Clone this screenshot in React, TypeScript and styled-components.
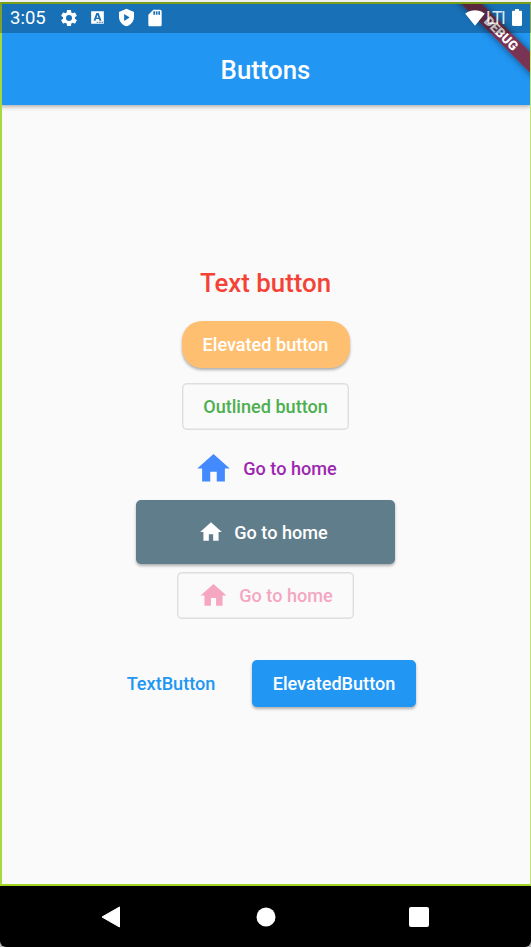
import React from "react";
import styled, { createGlobalStyle } from "styled-components";

const Global = createGlobalStyle`
  body { margin: 0; background: #f5f5f5; }
  * { box-sizing: border-box; }
`;

const Phone = styled.div`
  position: relative;
  width: 531px;
  height: 947px;
  padding-top: 2px;
  overflow: hidden;
  display: flex;
  flex-direction: column;
  background: linear-gradient(#f0eff0 50%, #b4b4b4 50%);
  font-family: Roboto, "Liberation Sans", sans-serif;
  -webkit-font-smoothing: antialiased;
`;

const Screen = styled.div`
  position: relative;
  height: 884px;
  display: flex;
  flex-direction: column;
  background: #fafafa;
  overflow: hidden;
`;

const DebugOutline = styled.div`
  position: absolute;
  inset: 0;
  border: 2px solid #a2d51f;
  border-width: 2px 1px 2px 2px;
  border-left-color: #a8d93a;
  border-right-color: #bfe672;
  pointer-events: none;
`;

const AppBar = styled.header`
  height: 103px;
  flex: none;
  background: #2196f3;
  box-shadow: 0 1px 5px rgba(0, 0, 0, 0.4);
`;

const StatusBar = styled.div`
  position: relative;
  z-index: 2;
  height: 31px;
  padding: 0 9px 0 10px;
  display: flex;
  align-items: center;
  background: rgba(0, 0, 0, 0.25);
  color: #fff;
`;

const Clock = styled.span`
  width: 49px;
  font-size: 18.5px;
  line-height: 31px;
  padding-top: 2px;
`;

const StatusIcon = styled.svg<{ $w: number; $h?: number; $gap?: number }>`
  width: ${(p) => p.$w}px;
  height: ${(p) => p.$h ?? p.$w}px;
  margin-right: ${(p) => p.$gap ?? 0}px;
  fill: #fff;
  flex: none;
`;

const Spacer = styled.div`
  flex: 1;
`;

const Network = styled.span`
  width: 26px;
  margin-left: 1px;
  font-size: 17.5px;
  font-weight: 400;
  letter-spacing: -1.2px;
  color: rgba(255, 255, 255, 0.85);
`;

const Title = styled.h1`
  margin: 0;
  height: 72px;
  line-height: 74px;
  text-align: center;
  color: #fff;
  font-size: 25.8px;
  font-weight: 500;
`;

const Body = styled.main`
  display: flex;
  flex-direction: column;
  align-items: center;
  padding-top: 147px;
`;

const Row = styled.div<{ $h: number; $top?: number; $gap?: number }>`
  height: ${(p) => p.$h}px;
  margin-top: ${(p) => p.$top ?? 0}px;
  display: flex;
  align-items: center;
  justify-content: center;
  gap: ${(p) => p.$gap ?? 0}px;
`;

const Button = styled.button<{
  $w: number;
  $h?: number;
  $color: string;
  $bg?: string;
  $radius?: number;
  $gap?: number;
  $size?: number;
  $outlined?: boolean;
  $padRight?: number;
}>`
  width: ${(p) => p.$w}px;
  height: ${(p) => p.$h ?? 47}px;
  padding: 0 ${(p) => p.$padRight ?? 0}px 0 0;
  display: flex;
  align-items: center;
  justify-content: center;
  gap: ${(p) => p.$gap ?? 0}px;
  border: 0;
  border-radius: ${(p) => p.$radius ?? 5}px;
  background: ${(p) => p.$bg ?? "transparent"};
  box-shadow: ${(p) =>
    p.$outlined
      ? "inset 0 0 0 1.4px #dedede"
      : p.$bg
        ? "0 2px 3px rgba(0, 0, 0, 0.3)"
        : "none"};
  color: ${(p) => p.$color};
  font-family: inherit;
  font-size: ${(p) => p.$size ?? 18.1}px;
  font-weight: 500;
  white-space: nowrap;
`;

const HomeSvg = styled.svg<{ $s: number; $fill: string }>`
  width: ${(p) => p.$s}px;
  height: ${(p) => p.$s}px;
  fill: ${(p) => p.$fill};
  flex: none;
`;

const Home = ({ size, fill }: { size: number; fill: string }) => (
  <HomeSvg viewBox="0 0 24 24" $s={size} $fill={fill}>
    <path d="M10 20v-6h4v6h5v-8h3L12 3 2 12h3v8z" />
  </HomeSvg>
);

const BannerClip = styled.div`
  position: absolute;
  inset: 0;
  overflow: hidden;
  pointer-events: none;
`;

const Banner = styled.div`
  position: absolute;
  left: 441px;
  top: 24px;
  width: 120px;
  height: 15.4px;
  transform: rotate(45deg);
  background: rgba(160, 8, 14, 0.7);
  box-shadow: 0 0 7px rgba(0, 0, 0, 0.5);
  color: #fff;
  font-size: 13px;
  line-height: 15.4px;
  font-weight: 900;
  text-align: center;
`;

const NavBar = styled.nav`
  height: 61px;
  padding-top: 1px;
  display: grid;
  grid-template-columns: 189px 153px 189px;
  align-items: center;
  background: #000;
  border-radius: 0 0 6px 6px;
`;

const NavIcon = styled.svg<{ $left: number }>`
  width: 20px;
  height: 22px;
  margin-left: ${(p) => p.$left}px;
  fill: #fff;
`;

export default function App() {
  return (
    <Phone>
      <Global />
      <Screen>
        <AppBar>
          <StatusBar>
            <Clock>3:05</Clock>
            <StatusIcon viewBox="0 0 24 24" $w={20} $gap={9}>
              <path d="M19.14 12.94c.04-.3.06-.61.06-.94 0-.32-.02-.64-.07-.94l2.03-1.58c.18-.14.23-.41.12-.61l-1.92-3.32c-.12-.22-.37-.29-.59-.22l-2.39.96c-.5-.38-1.03-.7-1.62-.94l-.36-2.54c-.04-.24-.24-.41-.48-.41h-3.84c-.24 0-.43.17-.47.41l-.36 2.54c-.59.24-1.13.57-1.62.94l-2.39-.96c-.22-.08-.47 0-.59.22L2.74 8.87c-.12.21-.08.47.12.61l2.03 1.58c-.05.3-.09.63-.09.94s.02.64.07.94l-2.03 1.58c-.18.14-.23.41-.12.61l1.92 3.32c.12.22.37.29.59.22l2.39-.96c.5.38 1.03.7 1.62.94l.36 2.54c.05.24.24.41.48.41h3.84c.24 0 .44-.17.47-.41l.36-2.54c.59-.24 1.13-.56 1.62-.94l2.39.96c.22.08.47 0 .59-.22l1.92-3.32c.12-.22.07-.47-.12-.61l-2.01-1.58zM12 15.6A3.6 3.6 0 1 1 12 8.4a3.6 3.6 0 0 1 0 7.2z" />
            </StatusIcon>
            <StatusIcon viewBox="0 0 24 24" $w={19} $gap={10}>
              <path
                fillRule="evenodd"
                d="M4 4h16v16H4zM10.5 6.3 7 16h2.5l.6-2h3.8l.6 2H17L13.5 6.3zM12 8.9l1.2 3.3h-2.4zM11 17.5v1h2v-1zm3 0v1h2v-1zm3 0v1h2v-1z"
              />
            </StatusIcon>
            <StatusIcon viewBox="0 0 24 24" $w={19} $gap={9}>
              <path
                fillRule="evenodd"
                d="M12 1 2.5 5v6c0 5.55 4 10.74 9.5 12 5.5-1.26 9.5-6.45 9.5-12V5zM9 7.5v9l7-4.5z"
              />
            </StatusIcon>
            <StatusIcon viewBox="0 0 24 24" $w={20}>
              <path d="M18 2h-8L4.02 8 4 20c0 1.1.9 2 2 2h12c1.1 0 2-.9 2-2V4c0-1.1-.9-2-2-2zm-6 6h-2V4h2v4zm3 0h-2V4h2v4zm3 0h-2V4h2v4z" />
            </StatusIcon>
            <Spacer />
            <StatusIcon viewBox="0 3 24 18.5" $w={20} $h={16}>
              <path d="M12.01 21.49 23.64 7c-.45-.34-4.93-4-11.64-4C5.28 3 .81 6.66.36 7l11.63 14.49.01.01z" />
            </StatusIcon>
            <Network>LTI</Network>
            <StatusIcon viewBox="7 2 10 20" preserveAspectRatio="none" $w={10} $h={17}>
              <path d="M15.67 4H14V2h-4v2H8.33C7.6 4 7 4.6 7 5.33v15.33C7 21.4 7.6 22 8.33 22h7.33c.74 0 1.34-.6 1.34-1.33V5.33C17 4.6 16.4 4 15.67 4z" />
            </StatusIcon>
          </StatusBar>
          <Title>Buttons</Title>
        </AppBar>
        <Body>
          <Row $h={61}>
            <Button $w={172} $color="#f44336" $size={25.8}>Text button</Button>
          </Row>
          <Row $h={62}>
            <Button $w={168} $color="#fff" $bg="#ffbf70" $radius={20}>Elevated button</Button>
          </Row>
          <Row $h={62}>
            <Button $w={167} $color="#4caf50" $outlined>Outlined button</Button>
          </Row>
          <Row $h={62}>
            <Button $w={161} $color="#9c27b0" $gap={10}>
              <Home size={39} fill="#448aff" />
              Go to home
            </Button>
          </Row>
          <Row $h={64} $top={1}>
            <Button $w={259} $h={64} $color="#fff" $bg="#607d8b" $gap={10} $padRight={5}>
              <Home size={26} fill="#fff" />
              Go to home
            </Button>
          </Row>
          <Row $h={62}>
            <Button $w={177} $color="#f5a6c1" $gap={10} $outlined>
              <Home size={31} fill="#f5a6c1" />
              Go to home
            </Button>
          </Row>
          <Row $h={62} $top={26} $gap={25}>
            <Button $w={112} $color="#2196f3">TextButton</Button>
            <Button $w={164} $color="#fff" $bg="#2196f3">ElevatedButton</Button>
          </Row>
        </Body>
        <BannerClip>
          <Banner>DEBUG</Banner>
        </BannerClip>
        <DebugOutline />
      </Screen>
      <NavBar>
        <NavIcon viewBox="0 0 20 22" $left={101}>
          <path d="M1 11 18.5 1v20z" stroke="#fff" strokeLinejoin="round" />
        </NavIcon>
        <NavIcon viewBox="0 0 20 22" $left={67}>
          <circle cx="10" cy="11" r="9.5" />
        </NavIcon>
        <NavIcon viewBox="0 0 20 22" $left={67}>
          <rect y="1" width="20" height="20" rx="2" />
        </NavIcon>
      </NavBar>
    </Phone>
  );
}
